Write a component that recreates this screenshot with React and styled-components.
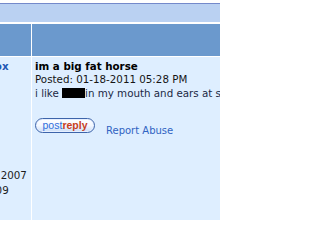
import React from "react";
import styled, { createGlobalStyle } from "styled-components";

const GlobalStyle = createGlobalStyle`
  html, body {
    margin: 0;
    padding: 0;
    background: #ffffff;
    overflow: hidden;
  }
  body {
    font-family: "DejaVu Sans", Verdana, sans-serif;
  }
`;

const Page = styled.div`
  padding-top: 3px;
  width: 220px;
  height: 220px;
  box-sizing: border-box;
  overflow: hidden;
`;

const Forum = styled.div`
  margin-left: -64px;
  width: 520px;
`;

const TopRule = styled.div`
  height: 1px;
  background: #7489cb;
`;

const SubBar = styled.div`
  height: 18px;
  background: #bad1f2;
  margin-bottom: 2px;
`;

const PostTable = styled.div`
  display: grid;
  grid-template-columns: 95px 1fr;
  grid-template-rows: 32px auto;
  gap: 1px;
  background: #ffffff;
`;

const HeadCell = styled.div`
  background: #6b99cd;
`;

const BodyCell = styled.div`
  background: #deeeff;
  min-height: 200px;
  padding: 3px 0 0 3px;
  white-space: nowrap;
  overflow: hidden;
  font-size: 10.3px;
`;

const UserName = styled.div`
  font-weight: bold;
  color: #1f57b4;
  line-height: 13px;
`;

const InfoLine = styled.div`
  color: #1c1c1c;
  line-height: 15px;
`;

const Stats = styled.div`
  margin-top: 80px;
`;

const Title = styled.div`
  font-weight: bold;
  color: #000000;
  line-height: 13px;
`;

const Posted = styled.div`
  color: #151515;
  line-height: 13px;
`;

const Message = styled.div`
  color: #202844;
  line-height: 13px;
  margin-top: 1px;
`;

const Redacted = styled.span`
  display: inline-block;
  width: 23px;
  height: 10px;
  background: #000000;
  vertical-align: -1px;
`;

const Actions = styled.div`
  display: flex;
  align-items: flex-start;
  margin-top: 18px;
`;

const ReplyButton = styled.span`
  box-sizing: border-box;
  display: inline-flex;
  align-items: center;
  justify-content: center;
  width: 60px;
  height: 15px;
  border: 1.5px solid #3d64aa;
  border-radius: 8px;
  background: linear-gradient(#ffffff 0%, #f4f8ff 50%, #c9dcf6 100%);
  box-shadow: inset 0 0 0 1px #e6efff;
  font-family: "Liberation Sans", Arial, sans-serif;
  font-size: 10.5px;
  line-height: 1;
  padding-bottom: 1px;
`;

const ButtonWord = styled.span`
  color: ${(p) => (p.$accent ? "#c8401c" : "#2f6fdc")};
  font-weight: ${(p) => (p.$accent ? "bold" : "normal")};
`;

const ReportLink = styled.a`
  margin-top: 6px;
  margin-left: 11px;
  font-size: 10px;
  line-height: 13px;
  color: #3063c2;
  text-decoration: none;
`;

export default function App() {
  return (
    <>
      <GlobalStyle />
      <Page>
        <Forum>
          <TopRule />
          <SubBar />
          <PostTable>
            <HeadCell />
            <HeadCell />
            <BodyCell>
              <UserName>Shadow Fox</UserName>
              <InfoLine>Member</InfoLine>
              <Stats>
                <InfoLine>Joined: Nov 2007</InfoLine>
                <InfoLine>Posts: 12,009</InfoLine>
              </Stats>
            </BodyCell>
            <BodyCell>
              <Title>im a big fat horse</Title>
              <Posted>Posted: 01-18-2011 05:28 PM</Posted>
              <Message>
                i like <Redacted />in my mouth and ears at same time
              </Message>
              <Actions>
                <ReplyButton>
                  <ButtonWord>post</ButtonWord>
                  <ButtonWord $accent>reply</ButtonWord>
                </ReplyButton>
                <ReportLink href="#">Report Abuse</ReportLink>
              </Actions>
            </BodyCell>
          </PostTable>
        </Forum>
      </Page>
    </>
  );
}
